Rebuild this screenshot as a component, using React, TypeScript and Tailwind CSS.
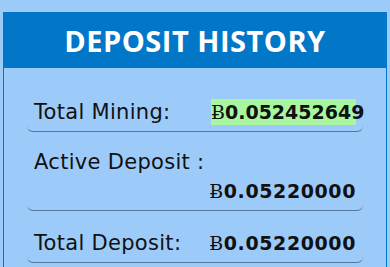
const font = { fontFamily: '"DejaVu Sans", "Open Sans", sans-serif' };

function Coin() {
  return <span className="font-normal [font-family:'DejaVu_Serif',serif]">Ƀ</span>;
}

export default function App() {
  return (
    <div className="min-h-[267px] bg-[#9dcbf9] px-[3px] pt-3" style={font}>
      <div className="border border-[#0277c8]">
        <div className="flex h-[55px] items-center justify-center bg-[#0277c8]">
          <h2 className="text-[29px] font-bold tracking-[0.5px] text-white [font-family:'Open_Sans',sans-serif]">
            DEPOSIT HISTORY
          </h2>
        </div>
        <div className="px-[23px] pt-[22px] pb-2 text-[21px] leading-[26px] text-[#111]">
          <div className="flex items-center justify-between rounded-b-[6px] border-b border-[#55779c] px-[7px] pt-[9px] pb-[6px]">
            <span className="tracking-[0.3px]">Total Mining:</span>
            <span className="flex h-[26px] w-[145px] items-center whitespace-nowrap bg-[#a8f7a0] text-[19px] font-bold">
              <Coin />0.052452649
            </span>
          </div>
          <div className="mt-2 rounded-b-[6px] border-b border-[#55779c] px-[7px] pt-[9px] pb-[6px]">
            <div className="flex h-[26px] items-center tracking-[0.3px]">Active Deposit :</div>
            <div className="mt-[3px] flex h-[26px] items-center justify-end text-[19px] font-bold tracking-[0.6px]">
              <Coin />0.05220000
            </div>
          </div>
          <div className="mt-2 flex items-center justify-between rounded-b-[6px] border-b border-[#55779c] px-[7px] pt-[11px] pb-[6px]">
            <span className="flex h-[26px] items-center tracking-[0.3px]">Total Deposit:</span>
            <span className="flex items-center text-[19px] font-bold tracking-[0.6px]">
              <Coin />0.05220000
            </span>
          </div>
        </div>
      </div>
    </div>
  );
}
